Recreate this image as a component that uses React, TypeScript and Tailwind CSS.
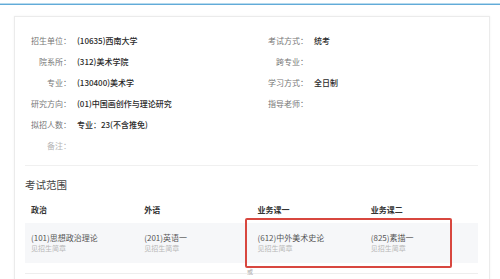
const font = { fontFamily: '"Noto Sans CJK SC", "Noto Sans", sans-serif' };

type Row = { label: string; value?: string; right?: { label: string; value?: string }; faint?: boolean };

const rows: Row[] = [
  { label: "招生单位：", value: "(10635)西南大学", right: { label: "考试方式：", value: "统考" } },
  { label: "院系所：", value: "(312)美术学院", right: { label: "跨专业：" } },
  { label: "专业：", value: "(130400)美术学", right: { label: "学习方式：", value: "全日制" } },
  { label: "研究方向：", value: "(01)中国画创作与理论研究", right: { label: "指导老师：" } },
  { label: "拟招人数：", value: "专业：23(不含推免)" },
  { label: "备注：", faint: true },
];

const subjects = [
  { head: "政治", name: "(101)思想政治理论" },
  { head: "外语", name: "(201)英语一" },
  { head: "业务课一", name: "(612)中外美术史论" },
  { head: "业务课二", name: "(825)素描一" },
];

function InfoCell({ label, value, faint }: { label: string; value?: string; faint?: boolean }) {
  return (
    <div className="flex items-center">
      <span className={`w-[56px] text-right text-[8px] ${faint ? "text-[#b5b5b5]" : "text-[#777]"}`}>{label}</span>
      {value && <span className="ml-[6px] text-[8px] font-medium text-[#2a2a2a]">{value}</span>}
    </div>
  );
}

export default function App() {
  return (
    <div className="relative w-[500px] h-[279px] overflow-hidden bg-white" style={font}>
      <div className="mt-[3px] h-px bg-[#b6daee]" />
      <div className="h-px bg-[#62abd8]" />

      <div className="ml-[14px] mt-[11px] w-[476px] h-[300px] border border-[#ebebeb] bg-white shadow-[0_0_2px_rgba(0,0,0,0.06)]">
        <div className="pt-[13px]">
          {rows.map((r) => (
            <div key={r.label} className="grid grid-cols-[237px_1fr] h-[21px]">
              <InfoCell label={r.label} value={r.value} faint={r.faint} />
              {r.right ? <InfoCell label={r.right.label} value={r.right.value} /> : <div />}
            </div>
          ))}
        </div>

        <div className="ml-[10px] w-[453px]">
          <div className="mt-[9px] h-px bg-[#f0f0f0]" />
          <div className="mt-[9px] h-[20px] flex items-center text-[10.5px] text-[#444]">考试范围</div>

          <div className="mt-[2px] grid grid-cols-4 h-[26px] items-center">
            {subjects.map((s) => (
              <div key={s.head} className="pl-[6px] text-[8px] font-bold text-[#333]">
                {s.head}
              </div>
            ))}
          </div>

          <div className="grid grid-cols-4 h-[40px] bg-[#f6f7f9] pt-[9px]">
            {subjects.map((s) => (
              <div key={s.head} className="pl-[6px]">
                <div className="text-[8px] leading-[11px] text-[#555]">{s.name}</div>
                <div className="text-[7px] leading-[10px] text-[#b8b8b8]">见招生简章</div>
              </div>
            ))}
          </div>

          <div className="mt-[10px] h-px bg-[#eeeeee]" />
        </div>
      </div>

      <div className="absolute left-[245px] top-[218px] w-[207px] h-[50px] border-2 border-[#d8473f] rounded-[2px]" />
      <div className="absolute left-[247px] top-[268px] text-[6px] leading-[8px] text-[#aaa]">或</div>
    </div>
  );
}
